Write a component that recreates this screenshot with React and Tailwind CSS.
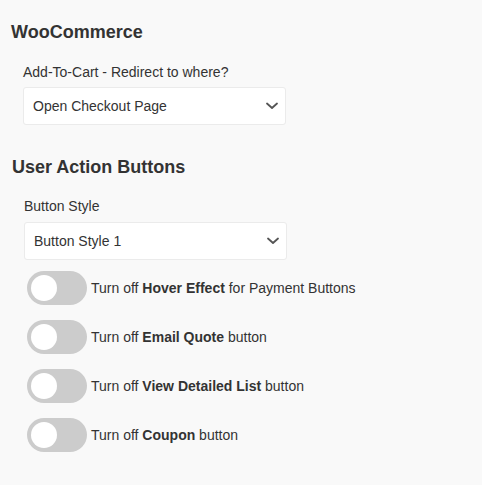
import React from "react";

function Chevron() {
  return (
    <svg width="12" height="8" viewBox="0 0 12 8" className="shrink-0">
      <path d="M1 1.5 L6 6 L11 1.5" fill="none" stroke="#555" strokeWidth="1.8" strokeLinecap="round" strokeLinejoin="round" />
    </svg>
  );
}

function Select({ value }) {
  return (
    <div className="flex h-[38px] w-[263px] items-center justify-between rounded-[3px] border border-[#ebebeb] bg-white pl-[9px] pr-[7px] text-[14px] leading-[16px] text-[#333]">
      <span>{value}</span>
      <Chevron />
    </div>
  );
}

function Toggle({ children }) {
  return (
    <div className="flex items-center">
      <div className="relative h-[34px] w-[60px] shrink-0 rounded-full bg-[#cccccc]">
        <div className="absolute left-[4px] top-[4px] h-[26px] w-[26px] rounded-full bg-white" />
      </div>
      <span className="ml-[4px] text-[14px] leading-[16px] text-[#333]">{children}</span>
    </div>
  );
}

export default function App() {
  return (
    <div
      className="h-[485px] w-[482px] overflow-hidden bg-[#f9f9f9] pt-[22px]"
      style={{ fontFamily: '"Liberation Sans", Arial, sans-serif' }}
    >
      <div className="pl-[11px]">
        <h2 className="text-[18px] font-bold leading-[21px] text-[#333]">WooCommerce</h2>
        <div className="mt-[21px] pl-[12px]">
          <div className="text-[14px] leading-[16px] text-[#333]">Add-To-Cart - Redirect to where?</div>
          <div className="mt-[7px]">
            <Select value="Open Checkout Page" />
          </div>
        </div>
      </div>
      <div className="mt-[32px] pl-[12px]">
        <h2 className="text-[18px] font-bold leading-[21px] text-[#333]">User Action Buttons</h2>
        <div className="mt-[20px] pl-[12px]">
          <div className="text-[14px] leading-[16px] text-[#333]">Button Style</div>
          <div className="mt-[8px]">
            <Select value="Button Style 1" />
          </div>
          <div className="mt-[11px] flex flex-col gap-[15px] pl-[3px]">
            <Toggle>
              Turn off <b>Hover Effect</b> for Payment Buttons
            </Toggle>
            <Toggle>
              Turn off <b>Email Quote</b> button
            </Toggle>
            <Toggle>
              Turn off <b>View Detailed List</b> button
            </Toggle>
            <Toggle>
              Turn off <b>Coupon</b> button
            </Toggle>
          </div>
        </div>
      </div>
    </div>
  );
}
